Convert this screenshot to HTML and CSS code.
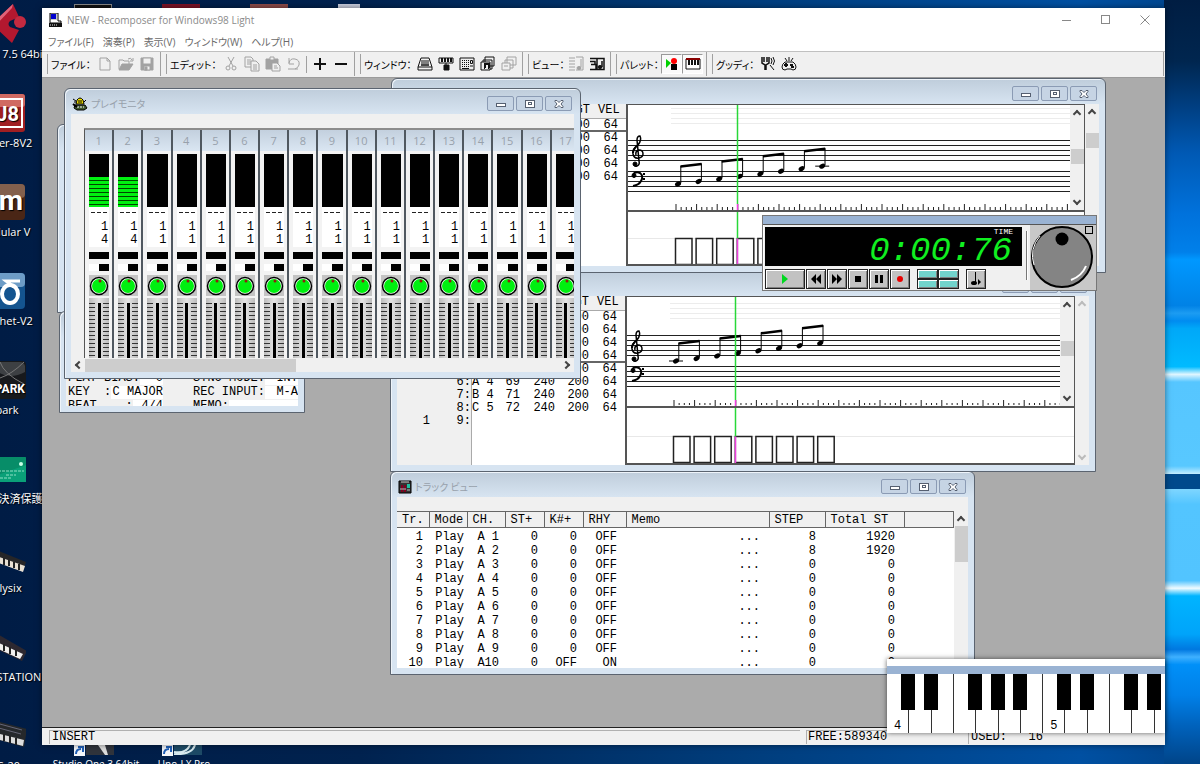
FILE: index.html
```
<!DOCTYPE html>
<html lang="ja">
<head>
    <meta charset="UTF-8">
    <meta name="viewport" content="width=device-width, initial-scale=1.0">
    <title>Recomposer for Windows98 Light</title>
    <link rel="stylesheet" href="styles.css">
</head>
<body>
    <div class="wallpaper-beam"></div>

    <!-- Desktop icons -->
    <div class="desktop-icons">
        <a href="#" class="shortcut">
            <svg width="48" height="48" viewBox="0 0 48 48"><path d="M35 4 20 18q-5 6 0 12l14 13 7-13-9-3q-3-3 0-6l9-4z" fill="#b3182f"/><path d="M35 4 20 18q-3 3-2 7L34 8z" fill="#e0637a"/><circle cx="42" cy="22" r="6" fill="#c32a40"/></svg>
            <span>Cubase 7.5 64bit</span>
        </a>
        <a href="#" class="shortcut">
            <svg width="48" height="48" viewBox="0 0 48 48"><rect x="1" y="5" width="46" height="38" rx="3" fill="#a11f22"/><rect x="1" y="5" width="46" height="13" rx="3" fill="#d06a62"/><rect x="4" y="10" width="40" height="28" fill="none" stroke="#fff" stroke-width="2"/><text x="41" y="32" text-anchor="end" class="logo-text logo-big">J8</text></svg>
            <span>Jupiter-8V2</span>
        </a>
        <a href="#" class="shortcut">
            <svg width="48" height="48" viewBox="0 0 48 48"><rect x="1" y="6" width="46" height="36" rx="4" fill="#4a2616"/><rect x="1" y="6" width="46" height="14" rx="4" fill="#82604d"/><text x="45" y="32" text-anchor="end" class="logo-text logo-huge">m</text></svg>
            <span>Modular V</span>
        </a>
        <a href="#" class="shortcut">
            <svg width="48" height="48" viewBox="0 0 48 48"><rect x="1" y="6" width="46" height="36" rx="4" fill="#14548f"/><rect x="1" y="6" width="46" height="14" rx="4" fill="#6d9cc6"/><path d="M42 14H28l8 6" fill="none" stroke="#fff" stroke-width="3"/><ellipse cx="32" cy="27" rx="8" ry="9" fill="none" stroke="#fff" stroke-width="4"/></svg>
            <span>Prophet-V2</span>
        </a>
        <a href="#" class="shortcut">
            <svg width="48" height="48" viewBox="0 0 48 48"><rect x="1" y="5" width="47" height="38" rx="4" fill="#17191c"/><path d="M20 16q12 8 27 0v-6q-1-4-5-4H20z" fill="#3d4043"/><path d="M22 6q4 12 24 22M22 22q12-4 24-16" stroke="#777" fill="none"/><text x="47" y="37" text-anchor="end" class="logo-text">SPARK</text></svg>
            <span>Spark</span>
        </a>
        <a href="#" class="shortcut">
            <svg width="48" height="48" viewBox="0 0 48 48"><rect x="0" y="12" width="49" height="25" rx="2" fill="#078d68"/><path d="M0 37 48 20v17z" fill="#0aa078"/><path d="M20 26h26M28 30h10M22 33h12" stroke="#8fe0c4" stroke-dasharray="3 1"/><circle cx="43" cy="19" r="2" fill="#c8ffe8"/></svg>
            <span>ネット決済保護</span>
        </a>
        <a href="#" class="shortcut">
            <svg width="48" height="48" viewBox="0 0 48 48"><path d="M8 12l40 16-3 9L8 24z" fill="#262628"/><path d="M10 19l37 13-2 6-35-13z" fill="#e8e0d4"/><path d="M16 20v7m5-5v7m5-5v7m5-5v6m5-4v6m5-4v6" stroke="#222" stroke-width="2"/></svg>
            <span>Polysix</span>
        </a>
        <a href="#" class="shortcut">
            <svg width="48" height="48" viewBox="0 0 48 48"><path d="M14 8l35 20-5 10-30-14z" fill="#2d2830"/><path d="M14 17l31 14-3 5-28-13z" fill="#f1efee"/><path d="M20 18v7m6-4v7m6-4v7m6-4v6" stroke="#222" stroke-width="2"/></svg>
            <span>WAVESTATION</span>
        </a>
        <a href="#" class="shortcut">
            <svg width="48" height="48" viewBox="0 0 48 48"><path d="M14 8l35 9-3 18-32-9z" fill="#25282b"/><path d="M14 20l32 8-1 6-31-8z" fill="#ddd"/><path d="M18 11l26 7m-27-3 26 7" stroke="#667"/><path d="M20 20v7m6-5v7m6-5v7m6-5v7" stroke="#222" stroke-width="2"/></svg>
            <span>MS-20</span>
        </a>
    </div>
    <div class="desktop-top">
        <span class="peek peek-dark"></span>
        <span class="peek peek-red"></span>
        <span class="peek peek-brown"></span>
        <span class="peek peek-light"></span>
    </div>
    <div class="desktop-bottom">
        <a href="#" class="shortcut-low">
            <svg width="44" height="12" viewBox="0 0 44 12"><rect x="12" width="28" height="10" fill="#30343c"/><path d="M24 0l7 10h3L31 0z" fill="#ddd"/><rect width="11" height="11" fill="#f4f7fb"/><path d="M2 9q0-5 5-5M4 2h5v5" fill="none" stroke="#2060b8" stroke-width="2"/></svg>
            <span>Studio One 3 64bit</span>
        </a>
        <a href="#" class="shortcut-low">
            <svg width="44" height="12" viewBox="0 0 44 12"><rect x="12" width="28" height="10" fill="#1d4a66"/><path d="M12 7q12 2 16-7m-16 9Q30 10 33 0" fill="none" stroke="#d8eaf0" stroke-width="2"/><rect width="11" height="11" fill="#f4f7fb"/><path d="M2 9q0-5 5-5M4 2h5v5" fill="none" stroke="#2060b8" stroke-width="2"/></svg>
            <span>Uno-LX Pro</span>
        </a>
    </div>

    <!-- Application window -->
    <div class="app">
        <header class="app-title">
            <svg width="14" height="15" viewBox="0 0 14 15"><rect x="1" y="0" width="7" height="7" fill="#c8c8c8"/><rect x="2" y="1" width="5" height="5" fill="#0000d0"/><path d="M1 0h8v8h3v2H1z" fill="none" stroke="#000"/><path d="M0 10h13v4H0z" fill="#111"/><path d="M1 12h8" stroke="#eee" stroke-dasharray="1 1"/></svg>
            <h1>NEW - Recomposer for Windows98 Light</h1>
            <div class="app-controls">
                <button aria-label="最小化"><svg width="10" height="10" viewBox="0 0 10 10"><path d="M0 5.500h9"/></svg></button>
                <button aria-label="最大化"><svg width="10" height="10" viewBox="0 0 10 10"><rect x=".5" y=".5" width="8" height="8"/></svg></button>
                <button aria-label="閉じる"><svg width="10" height="10" viewBox="0 0 10 10"><path d="M.5.5l9 9m0-9l-9 9"/></svg></button>
            </div>
        </header>

        <nav class="menu">
            <a href="#">ファイル(F)</a>
            <a href="#">演奏(P)</a>
            <a href="#">表示(V)</a>
            <a href="#">ウィンドウ(W)</a>
            <a href="#">ヘルプ(H)</a>
        </nav>

        <div class="toolbar">
            <div class="group">
                <span class="label">ファイル：</span>
                <div class="tools">
                    <button class="off" aria-label="新規"><svg viewBox="0 0 16 16"><path d="M3 2h7l3 3v9H3zM10 2v3h3"/></svg></button>
                    <button class="off" aria-label="開く"><svg viewBox="0 0 16 16"><path d="M1 13V4h4l1 1h5v3"/><path d="M1 14l3-6h11l-4 6z" class="fill"/><path d="M10 3q3-2 4 1m1-2v3h-3"/></svg></button>
                    <button class="off" aria-label="保存"><svg viewBox="0 0 16 16"><path d="M2 2h12v12H2z" class="fill"/><path d="M4 2h8v6H4z" fill="#f0f0f0"/><path d="M5 10h6v4H5z" fill="#f0f0f0"/><path d="M6 11h2v3H6z" class="fill"/></svg></button>
                </div>
            </div>
            <div class="group">
                <span class="label">エディット：</span>
                <div class="tools">
                    <button class="off" aria-label="切り取り"><svg viewBox="0 0 16 16"><path d="M5 1l5 9M11 1l-5 9"/><circle cx="5" cy="12" r="2"/><circle cx="11" cy="12" r="2"/></svg></button>
                    <button class="off" aria-label="コピー"><svg viewBox="0 0 16 16"><path d="M1 1h6l2 2v8H1zM3 4h4M3 6h4M3 8h4"/><path d="M7 5h5l3 3v7H7z" fill="#f0f0f0"/><path d="M9 9h4M9 11h4M9 13h4"/></svg></button>
                    <button class="off" aria-label="貼り付け"><svg viewBox="0 0 16 16"><path d="M1 3h12v10H1z" class="fill"/><path d="M5 1h4v3H5z" fill="#f0f0f0"/><path d="M7 7h5l3 3v5H7z" fill="#f0f0f0"/><path d="M9 10h3M9 12h4"/></svg></button>
                    <button class="off" aria-label="元に戻す"><svg viewBox="0 0 16 16"><path d="M3 7q1-5 6-4 5 1 4 6-1 3-4 4M3 2v6h5M2 13h10"/></svg></button>
                    <i class="sep"></i>
                    <button aria-label="追加"><svg viewBox="0 0 16 16"><path d="M2 8h12M8 2v12" stroke-width="2"/></svg></button>
                    <button aria-label="削除"><svg viewBox="0 0 16 16"><path d="M2 8h12" stroke-width="2"/></svg></button>
                </div>
            </div>
            <div class="group">
                <span class="label">ウィンドウ：</span>
                <div class="tools">
                    <button aria-label="ソング"><svg viewBox="0 0 16 16"><path d="M4 2h8l3 9v3H1v-3z"/><path d="M5 4v6m2-6v6m2-6v6m2-6v6M1 11h14M4 9h8"/></svg></button>
                    <button aria-label="再生モニタ"><svg viewBox="0 0 16 16"><path d="M1 2h14v5H1z"/><path d="M4 2v4m3-4v4m3-4v4m3-4v4" stroke-width="2"/><path d="M8 7v3M6 9h5v5H6z" class="fill"/></svg></button>
                    <button aria-label="トラック"><svg viewBox="0 0 16 16"><path d="M1 2h14v12H1z"/><path d="M3 4.500h7M3 6.500h7M3 8.500h7M3 10.500h7" stroke-dasharray="1 1"/><path d="M3 12.500h7M11.500 4.500h2v3h-2zM11 10h3"/></svg></button>
                    <button aria-label="譜面"><svg viewBox="0 0 16 16"><path d="M5 1h9v9H5zM3 4h9v9H3z"/><path d="M1 6h9v8H1z" fill="#f0f0f0"/><path d="M5 12V8h4v4M4 12h1m3 0h1" stroke-width="2"/></svg></button>
                    <button class="off" aria-label="重ねて表示"><svg viewBox="0 0 16 16"><path d="M6 1h9v8H6zM4 4h8v8H4z"/><path d="M1 7h8v7H1z" fill="#f0f0f0"/><path d="M3 10h4"/></svg></button>
                </div>
            </div>
            <div class="group">
                <span class="label">ビュー：</span>
                <div class="tools">
                    <button class="off" aria-label="リスト表示"><svg viewBox="0 0 16 16"><path d="M1 2h6M1 5h6M1 8h6M1 11h6M1 14h6M13 3v8M8 1h7v13H8"/><ellipse cx="11" cy="12" rx="2" ry="1.500" class="fill"/></svg></button>
                    <button aria-label="譜面表示"><svg viewBox="0 0 16 16"><path d="M1 2.500h14v11H8V2M1 5.500h5v3M2 8.500h5v5H1M13 5v6" stroke-width="1.500"/><ellipse cx="11" cy="11" rx="2" ry="1.500" class="fill"/></svg></button>
                </div>
            </div>
            <div class="group">
                <span class="label">パレット：</span>
                <div class="tools">
                    <button class="on" aria-label="トランスポート"><svg viewBox="0 0 16 16"><path d="M2 3l5 4-5 5z" fill="#00d000" stroke="none"/><path d="M7 8h6v6H7z" fill="#000" stroke="none"/><circle cx="10" cy="5" r="3" fill="#f00" stroke="none"/></svg></button>
                    <button class="on" aria-label="鍵盤"><svg viewBox="0 0 16 16"><path d="M1 3h14v10H1z" fill="#fff"/><path d="M1 3h14" stroke="#800" stroke-width="2"/><path d="M4 4v5m3-5v5m3-5v5m3-5v5" stroke-width="2"/></svg></button>
                </div>
            </div>
            <div class="group">
                <span class="label">グッディ：</span>
                <div class="tools start">
                    <button aria-label="チューナー"><svg viewBox="0 0 16 16"><path d="M2 1v6l3 2v5M9 1v6L6 9v5M4 1v5m3-5v5" stroke-width="1.500"/><path d="M11 2q2 3 0 6M13 1q3 4 0 8M10 9l4 5"/></svg></button>
                    <button aria-label="ゲーム"><svg viewBox="0 0 16 16"><path d="M4 6q-3 2-3 5t3 3l2-1h4l2 1q3 0 3-3t-3-5zM4 2l2 3m2-4v4m4-3l-2 3"/><path d="M3 9h4M5 7v4m4-2h3m-2 2h3" stroke-width="2"/></svg></button>
                </div>
            </div>
        </div>

        <!-- Document area -->
        <main class="mdi">
            <section class="win win-rear"></section>

            <section class="win win-song">
                <div class="win-title"></div>
                <div class="win-body song">
                    <div class="field"><label for="bias">PLAY BIAS:</label><input id="bias" value="0"></div>
                    <div class="field"><label for="sync">SYNC MODE:</label><input id="sync" value="INT"></div>
                    <div class="field"><label for="key">KEY  :</label><input id="key" value="C MAJOR"></div>
                    <div class="field"><label for="rec">REC INPUT:</label><input id="rec" value="M-A"></div>
                    <div class="field"><label for="beat">BEAT    :</label><input id="beat" value="4/4"></div>
                    <div class="field"><label for="memo">MEMO:</label><input id="memo"></div>
                </div>
            </section>

            <section class="win win-step-b">
                <div class="win-title"><span class="win-buttons"></span></div>
                <div class="win-body editor">
                    <table class="events"><colgroup><col class="c-meas"><col class="c-step"><col class="c-note"><col class="c-num"><col class="c-st"><col class="c-gt"><col class="c-vel"></colgroup><thead></thead><tbody id="eventsB"></tbody></table>
                    <div class="score" id="scoreB"></div>
                    <div class="vscroll faint"><i class="up"></i><i class="down"></i></div>
                </div>
            </section>

            <section class="win win-step-a">
                <div class="win-title"><span class="win-buttons"></span></div>
                <div class="win-body editor">
                    <table class="events"><colgroup><col class="c-meas"><col class="c-step"><col class="c-note"><col class="c-num"><col class="c-st"><col class="c-gt"><col class="c-vel"></colgroup><thead></thead><tbody id="eventsA"></tbody></table>
                    <div class="score" id="scoreA"></div>
                    <div class="vscroll"><i class="up"></i><b class="thumb thumb-a"></b></div>
                </div>
            </section>

            <section class="win win-track">
                <div class="win-title">
                    <svg width="14" height="14" viewBox="0 0 14 14"><path d="M1 1h12v12H1z" fill="#333" stroke="#000"/><path d="M3 2h8" stroke="#ccc"/><path d="M3 5h2v7H3zm3 0h2v7H6z" fill="#800020"/><path d="M9 4h3v4H9z" fill="#20c0a0"/><path d="M2 9h6M9 10h3" stroke="#bbb"/></svg>
                    <h2>トラック ビュー</h2>
                    <span class="win-buttons"></span>
                </div>
                <div class="win-body track">
                    <table class="tracks">
                        <colgroup><col class="t-tr"><col class="t-mode"><col class="t-ch"><col class="t-st"><col class="t-key"><col class="t-rhy"><col class="t-memo"><col class="t-step"><col class="t-total"><col></colgroup>
                        <thead><tr><th>Tr.</th><th>Mode</th><th>CH.</th><th>ST+</th><th>K#+</th><th>RHY</th><th>Memo</th><th>STEP</th><th>Total ST</th><th></th></tr></thead>
                        <tbody id="trackRows"></tbody>
                    </table>
                    <div class="vscroll"><i class="up"></i><b class="thumb thumb-track"></b></div>
                </div>
            </section>

            <section class="win win-monitor">
                <div class="win-title">
                    <svg width="16" height="14" viewBox="0 0 16 14"><path d="M5 3q3-4 6 0l1 4H4z" fill="#f0e000" stroke="#000"/><path d="M1 2l3 2M2 5h2M14 3l-2 2M7 3v3m2-3v3" stroke="#000"/><path d="M3 8h10l2 3-3 2H5L2 11z" fill="#405830" stroke="#000"/><path d="M5 10h7" stroke="#fff" stroke-dasharray="2 1"/><path d="M1 7l4 3" stroke="#000" stroke-width="2"/></svg>
                    <h2>プレイモニタ</h2>
                    <span class="win-buttons"></span>
                </div>
                <div class="win-body monitor">
                    <div class="strips" id="strips"></div>
                    <div class="hscroll"><i class="left"></i><b class="thumb"></b><i class="right"></i></div>
                </div>
            </section>

            <section class="transport">
                <div class="palette-bar"></div>
                <div class="transport-body">
                    <div class="deck">
                        <div class="lcd"><span class="lcd-label">TIME</span><span class="lcd-time">0:00:76</span></div>
                        <div class="keys">
                            <button class="wide" aria-label="再生"><svg width="12" height="10" viewBox="0 0 12 10"><path d="M3 0l6 5-6 5z" fill="#00d820"/></svg></button>
                            <button aria-label="巻戻し"><svg width="12" height="10" viewBox="0 0 12 10"><path d="M6 0v10L1 5zM11 0v10L6 5z"/></svg></button>
                            <button aria-label="早送り"><svg width="12" height="10" viewBox="0 0 12 10"><path d="M1 0v10l5-5zM6 0v10l5-5z"/></svg></button>
                            <button aria-label="停止"><svg width="12" height="10" viewBox="0 0 12 10"><path d="M3 2h6v6H3z"/></svg></button>
                            <button aria-label="一時停止"><svg width="12" height="10" viewBox="0 0 12 10"><path d="M2 1h3v8H2zM7 1h3v8H7z"/></svg></button>
                            <button aria-label="録音"><svg width="12" height="10" viewBox="0 0 12 10"><circle cx="6" cy="5" r="3" fill="#e80000"/></svg></button>
                            <div class="locators"><button aria-label="1"></button><button aria-label="2"></button><button aria-label="3"></button><button aria-label="4"></button></div>
                            <button aria-label="メトロノーム"><svg width="12" height="14" viewBox="0 0 12 14"><path d="M5 0h1v11H5z"/><ellipse cx="4" cy="11" rx="3" ry="2"/><path d="M8 7l3 3-3 3z"/></svg></button>
                        </div>
                    </div>
                    <i class="groove"></i>
                    <div class="jog">
                        <svg width="66" height="64" viewBox="0 0 66 64"><circle cx="32" cy="32" r="30" fill="#848484" stroke="#000" stroke-width="2"/><path d="M10 11A29 29 0 0 0 4 40" fill="none" stroke="#fff"/><path d="M41 55Q52 51 56 41" fill="none" stroke="#fff" stroke-width="2"/><circle cx="32" cy="14" r="6.500"/><rect x="55.500" y="1.500" width="7" height="7" fill="#c8c8c8" stroke="#000"/></svg>
                    </div>
                </div>
            </section>
        </main>

        <footer class="status">
            <span class="cell grow">INSERT</span>
            <span class="cell free">FREE:589340</span>
            <span class="cell used">USED:   16</span>
        </footer>

        <section class="piano">
            <div class="palette-bar"></div>
            <div class="piano-keys" id="pianoKeys"></div>
        </section>
    </div>

    <script src="script.js"></script>
</body>
</html>
```
FILE: styles.css
```
* { box-sizing: border-box; }
body {
    margin: 0;
    min-height: 100vh;
    position: relative;
    overflow: hidden;
    font-family: "Open Sans", "Noto Sans CJK JP", sans-serif;
    font-size: 11px;
    color: #000;
    background: linear-gradient(90deg, #001c45 0%, #00224f 30%, #003d7c 62%, #0050a2 90%, #004389 100%);
}
h1, h2 { margin: 0; font-weight: normal; }
a { color: inherit; text-decoration: none; }
button, input { font: inherit; margin: 0; padding: 0; border: 0; border-radius: 0; background: none; }

/* Wallpaper light on the right */
.wallpaper-beam {
    position: absolute;
    right: 0;
    top: 0;
    bottom: 0;
    width: 36px;
    background: linear-gradient(180deg, #001d42 0, #00264f 8%, #003f82 14%, #0059b4 20%, #0072dc 28%, #0080ea 33%, #0098ff 34%, #0082e6 40%, #1c9cf2 41%, #008cf0 42%, #00a8f8 43%, #00bbff 48%, #e0f6ff 49%, #56c6ff 50%, #58c8ff 61%, #c0ecff 62%, #004a8c 62%, #004a8c 64%, #7fd6ff 64%, #53c5ff 66%, #52c4ff 76%, #f0fbff 77%, #00b4ff 78%, #00a4fa 83%, #0078e0 85%, #3fb0ff 86%, #0090f8 87%, #0080e8 91%, #0062bc 95%, #004488 100%);
}

/* Desktop shortcuts */
.desktop-icons {
    position: absolute;
    left: -48px;
    top: 0;
    width: 100px;
    display: flex;
    flex-direction: column;
}
.shortcut {
    height: 89px;
    display: flex;
    flex-direction: column;
    align-items: center;
    color: #fff;
    white-space: nowrap;
    text-shadow: 1px 1px 1px #000;
}
.shortcut svg { flex: none; }
.shortcut span { padding-left: 4px; line-height: 12px; }
.logo-text { font: bold 12px Roboto, sans-serif; fill: #fff; }
.logo-big { font-size: 20px; }
.logo-huge { font-size: 28px; }
.desktop-top {
    position: absolute;
    left: 74px;
    top: 4px;
    display: flex;
    gap: 50px;
}
.peek { width: 38px; height: 5px; border: 1px solid #888; background: #111; }
.peek-red { background: #7c1226; border: 0; }
.peek-brown { background: #8c4a48; border: 0; }
.peek-light { width: 22px; background: #c8ccdc; border: 0; }
.desktop-bottom {
    position: absolute;
    left: 52px;
    bottom: -6px;
    display: flex;
}
.shortcut-low {
    display: flex;
    flex-direction: column;
    align-items: center;
    gap: 1px;
    width: 88px;
    color: #fff;
    font-size: 10px;
    line-height: 12px;
    white-space: nowrap;
}

/* Application frame */
.app {
    position: absolute;
    left: 42px;
    right: 35px;
    top: 8px;
    bottom: 19px;
    display: flex;
    flex-direction: column;
    background: #fff;
    box-shadow: 0 0 6px rgba(0, 0, 0, 0.5);
}
.app-title {
    height: 24px;
    flex: none;
    display: flex;
    align-items: center;
    gap: 4px;
    padding: 0 15px 0 7px;
    color: #8b8b8b;
}
.app-title h1 { font-size: 10px; flex: 1; }
.app-controls { display: flex; gap: 29px; }
.app-controls button { display: flex; }
.app-controls svg { fill: none; stroke: #888; }
.menu {
    height: 19px;
    flex: none;
    display: flex;
    align-items: center;
    gap: 9px;
    padding: 0 6px;
    font-size: 10px;
    color: #6a6a6a;
    font-feature-settings: "palt";
}
.toolbar {
    height: 27px;
    flex: none;
    display: grid;
    grid-template-columns: 119px 194px 168px 88px 96px 1fr;
    padding: 0 0 1px 1px;
    background: #f0f0f0;
    border-top: 1px solid #c0c0c0;
    border-bottom: 1px solid #9b9b9b;
}
.group {
    display: flex;
    align-items: center;
    padding: 0 3px 0 8px;
    border-right: 1px solid #a0a0a0;
    margin-right: 1px;
    background: linear-gradient(#a0a0a0, #a0a0a0) 4px 50% / 1px 20px no-repeat;
}
.label {
    font-size: 10px;
    font-feature-settings: "palt";
    white-space: nowrap;
}
.tools { display: flex; align-items: center; margin-left: auto; }
.tools.start { margin-left: 3px; }
.tools button {
    width: 21px;
    height: 20px;
    display: flex;
    align-items: center;
    justify-content: center;
}
.tools svg { width: 16px; height: 16px; fill: none; stroke: #111; }
.tools .fill { fill: #111; }
.tools .off svg { stroke: #a2a2a2; }
.tools .off .fill { fill: #a2a2a2; }
.tools .on { background: #fafafa; border: 1px solid #999; border-right-color: #fff; border-bottom-color: #fff; }
.sep { width: 1px; height: 17px; margin: 0 2px; background: #a0a0a0; }

/* Document area and child windows */
.mdi {
    flex: 1;
    min-height: 0;
    position: relative;
    overflow: hidden;
    background: #ababab;
    font-family: "Liberation Mono", "Noto Sans CJK JP", monospace;
    font-size: 12px;
}
.win {
    position: absolute;
    display: flex;
    flex-direction: column;
    padding: 0 6px 6px;
    border: 1px solid #5b6470;
    border-radius: 6px 6px 0 0;
    background: linear-gradient(#bfcddb 0, #d7e4f1 25px);
    box-shadow: inset 1px 1px 0 #eef4fa;
}
.win-title {
    height: 25px;
    flex: none;
    display: flex;
    align-items: center;
    gap: 3px;
    padding: 4px 2px 0 1px;
}
.win-title h2 {
    font-family: "Noto Sans CJK JP", sans-serif;
    font-size: 10px;
    font-feature-settings: "palt";
    color: #98a1ab;
}
.win-buttons { display: flex; gap: 2px; margin-left: auto; }
.win-buttons button {
    width: 27px;
    height: 15px;
    display: flex;
    align-items: center;
    justify-content: center;
    border: 1px solid #8b9bb4;
    border-radius: 2px;
    background: #c6d4e4;
}
.win-buttons svg { fill: #fff; stroke: #555f70; }
.win-body { flex: 1; min-height: 0; overflow: hidden; background: #f0f0f0; }
.win-rear { left: 15px; top: 46px; width: 300px; height: 189px; }
.win-song { left: 17px; top: 233px; width: 246px; height: 102px; }
.win-step-a { left: 349px; top: 0; width: 715px; height: 195px; }
.win-step-b { left: 348px; top: 192px; width: 706px; height: 202px; }
.win-track { left: 348px; top: 393px; width: 585px; height: 204px; }
.win-monitor { left: 22px; top: 10px; width: 517px; height: 291px; }

/* Song settings */
.song {
    display: grid;
    grid-template-columns: 95px 1fr;
    gap: 1px 30px;
    align-content: start;
    padding: 35px 0 0 2px;
    line-height: 13px;
}
.field { display: flex; min-width: 0; }
.field label { white-space: pre; }
.field input { flex: 1; min-width: 0; width: 0; height: 13px; background: #fff; text-align: right; }

/* Scroll bars */
.vscroll {
    width: 14px;
    flex: none;
    display: flex;
    flex-direction: column;
    align-items: center;
    padding: 6px 0;
    background: #f0f0f0;
}
.up, .down, .left, .right {
    width: 6px;
    height: 6px;
    border: solid #444;
    border-width: 2px 0 0 2px;
    transform: rotate(45deg);
}
.down { margin-top: auto; transform: rotate(225deg); }
.left { transform: rotate(-45deg); }
.right { transform: rotate(135deg); margin-left: auto; }
.faint i { border-color: #bbb; }
.thumb { background: #cdcdcd; }
.vscroll .thumb { width: 13px; height: 15px; }
.thumb-a { margin-top: 17px; }
.vscroll .thumb-track { height: 36px; margin-top: 3px; }

/* Step editor */
.editor { display: flex; background: linear-gradient(90deg, #f0f0f0 74px, #aaa 74px, #aaa 75px, #fff 75px); }
.events {
    width: 228px;
    flex: none;
    align-self: flex-start;
    table-layout: fixed;
    border-collapse: collapse;
    line-height: 13px;
}
.events th, .events td { height: 13px; padding: 0 8px 0 0; text-align: right; font-weight: normal; white-space: pre; }
.events thead th { height: 14px; background: #f0f0f0; border-bottom: 1px solid #aaa; }
.events .step { padding-right: 1px; }
.events .cursor td { background: linear-gradient(#666, #666) 0 100% / 100% 2px no-repeat; }
.c-meas { width: 41px; }
.c-step { width: 34px; }
.c-note, .c-num, .c-vel { width: 28px; }
.c-st { width: 35px; }
.c-gt { width: 34px; }
.score {
    flex: 1;
    min-width: 0;
    display: flex;
    flex-direction: column;
    border: solid #555;
    border-width: 1px 1px 2px 2px;
    background: #fff;
}
.staff-row { flex: 2; min-height: 0; display: flex; border-bottom: 2px solid #555; }
.staff-row svg { flex: 1; min-width: 0; height: 100%; }
.staff-row .vscroll { padding: 6px 0; }
.staff-row .thumb { margin-top: 32px; }
.velocity { flex: 1; min-height: 0; width: 100%; }

/* Track list */
.track { display: flex; padding-top: 14px; background: linear-gradient(#f0f0f0 30px, #fff 30px); }
.tracks {
    flex: 1;
    align-self: flex-start;
    table-layout: fixed;
    border-collapse: collapse;
    line-height: 14px;
}
.tracks th {
    height: 16px;
    padding: 0 0 0 5px;
    text-align: left;
    font-weight: normal;
    white-space: pre;
    background: #f0f0f0;
    border: solid #666;
    border-width: 1px 1px 1px 0;
}
.tracks td { height: 14px; padding: 0 6px 0 0; text-align: right; white-space: pre; }
.tracks td:nth-child(n+6) { padding-right: 9px; }
.tracks tbody tr:first-child td { height: 16px; padding-top: 2px; }
.tracks td:nth-child(2) { padding-right: 3px; }
.t-tr { width: 32px; }
.t-mode, .t-ch { width: 38px; }
.t-st, .t-key { width: 39px; }
.t-rhy { width: 43px; }
.t-memo { width: 143px; }
.t-step { width: 56px; }
.t-total { width: 79px; }

/* Play monitor */
.monitor { padding: 14px 0 0 13px; display: flex; flex-direction: column; }
.strips {
    flex: 1;
    min-height: 0;
    display: grid;
    grid-template-columns: repeat(17, 1fr);
    margin-right: -7px;
    overflow: hidden;
    border-top: 2px solid #8c8c8c;
    border-left: 1px solid #555;
    background: #fff;
}
.strip {
    display: flex;
    flex-direction: column;
    padding: 0 3px 0 4px;
    border-right: 2px solid #505860;
    background: #f3f3f3;
    min-width: 0;
    overflow: hidden;
}
.strip header {
    height: 21px;
    flex: none;
    margin: 0 -3px 3px -4px;
    font: 11px/21px "Open Sans", sans-serif;
    text-align: center;
    color: #98a1ab;
    background: linear-gradient(#c3d0de, #dae6f2);
}
.meter { height: 53px; flex: none; display: flex; align-items: flex-end; background: #000; }
.level { width: 100%; background: repeating-linear-gradient(#00f010 0 3px, #004400 3px 4px); }
.values { padding: 5px 1px 0 0; background: #fff; text-align: right; line-height: 13px; }
.values hr { height: 1px; margin: 0 0 8px 2px; border: 0; background: repeating-linear-gradient(90deg, #222 0 4px, #fff 4px 6px); }
.values div { height: 13px; }
.lamp { height: 7px; flex: none; margin-top: 5px; background: #000; }
.lamp.half { background: linear-gradient(90deg, #fff 50%, #000 50%); }
.knob { height: 21px; flex: none; margin-top: 4px; background: #c4c4c4; display: flex; justify-content: center; align-items: center; }
.fader { flex: 1; min-height: 0; margin-top: 2px; padding-top: 5px; display: flex; justify-content: space-between; background: linear-gradient(90deg, #bbb, #e4e4e4 50%, #bbb); }
.fader i { width: 6px; background: repeating-linear-gradient(#333 0 1px, transparent 1px 4px); }
.fader b { width: 3px; background: #000; }
.hscroll { height: 14px; flex: none; display: flex; align-items: center; margin-left: -8px; padding-right: 5px; }
.hscroll .thumb { width: 211px; height: 13px; margin-left: 3px; }

/* Transport palette */
.palette-bar { height: 8px; flex: none; background: #9ab3d3; }
.transport {
    position: absolute;
    left: 720px;
    top: 137px;
    width: 335px;
    border: 1px solid #777;
    background: #f0f0f0;
    box-shadow: inset 1px 1px 0 #fff;
}
.transport-body { display: flex; border-top: 1px solid #555; }
.deck { flex: 1; padding: 2px 0 1px 2px; }
.lcd {
    position: relative;
    height: 39px;
    padding: 9px 10px 0 0;
    margin-bottom: 3px;
    text-align: right;
    color: #10f020;
    background: #000;
    font-size: 34px;
    font-style: italic;
    line-height: 30px;
}
.lcd-label {
    position: absolute;
    right: 9px;
    top: 0;
    font: 8px/10px "Liberation Mono", monospace;
    color: #fff;
}
.keys { display: flex; gap: 1px; }
.keys button {
    width: 20px;
    height: 20px;
    display: flex;
    align-items: center;
    justify-content: center;
    background: #c2c2c2;
    border: 1px solid #222;
    box-shadow: inset 1px 1px 0 #fff, inset -1px -1px 0 #808080;
}
.keys .wide { width: 40px; }
.locators { display: grid; grid-template-columns: 1fr 1fr; width: 42px; margin: 0 6px; }
.keys .locators button { width: 21px; height: 10px; background: #72d4cc; }
.groove { width: 2px; margin: 6px 2px 10px 4px; background: #777; border-right: 1px solid #fff; }
.jog { background: #c8c8c8; display: flex; }

/* Status bar */
.status {
    height: 18px;
    flex: none;
    display: flex;
    padding: 2px 0 1px 7px;
    gap: 6px;
    border-top: 1px solid #222;
    background: #f0f0f0;
    font: 12px/14px "Liberation Mono", monospace;
    white-space: pre;
}
.cell { padding-left: 2px; border: 1px solid #b0b0b0; border-width: 1px 0 0 1px; line-height: 13px; }
.grow { flex: 1; }
.free { width: 156px; padding-left: 1px; }
.used { width: 197px; }

/* Keyboard palette */
.piano {
    position: absolute;
    right: 0;
    bottom: 12px;
    width: 278px;
    overflow: hidden;
    border-top: 7px solid #fff;
    background: #fff;
    box-shadow: 0 0 5px rgba(0, 0, 0, 0.6);
}
.piano-keys { display: grid; grid-template-columns: repeat(13, 1fr); height: 59px; margin-right: -12px; }
.white {
    position: relative;
    padding: 0 0 1px;
    display: flex;
    align-items: flex-end;
    justify-content: center;
    font: 12px/12px "Liberation Mono", monospace;
    border-right: 1px solid #333;
    background: #fff;
}
.black::after {
    content: "";
    position: absolute;
    z-index: 1;
    right: -7px;
    top: 0;
    width: 14px;
    height: 36px;
    background: #000;
}
```
FILE: script.js
```
const $ = id => document.getElementById(id);

// window buttons
document.querySelectorAll('.win-buttons').forEach(box => {
    box.innerHTML = `
        <button aria-label="最小化"><svg width="10" height="8" viewBox="0 0 10 8"><rect x=".5" y="3.500" width="9" height="3"/></svg></button>
        <button aria-label="最大化"><svg width="10" height="8" viewBox="0 0 10 8"><rect x=".5" y=".5" width="9" height="7"/><rect x="3.500" y="2.500" width="3" height="2"/></svg></button>
        <button aria-label="閉じる"><svg width="10" height="8" viewBox="0 0 10 8"><path d="M1 .5h2l2 2 2-2h2v1L7 4l2 2.500v1H7l-2-2-2 2H1v-1L3 4 1 1.500z"/></svg></button>`;
});

// step lists
const header = '<tr><th></th><th></th><th></th><th></th><th></th><th>GT</th><th>VEL</th></tr>';
document.querySelectorAll('.events thead').forEach(t => t.innerHTML = header);

function eventRows(notes, cursor, extra) {
    let html = notes.map(([name, num], i) => `
        <tr class="${i === cursor ? 'cursor' : ''}"><td></td><td class="step">${i + 1}:</td>
        <td>${name}</td><td>${num}</td><td>240</td><td>200</td><td>64</td></tr>`).join('');
    if (extra) {
        html += `<tr><td>1</td><td class="step">${notes.length + 1}:</td><td colspan="5"></td></tr>`;
    }
    return html;
}
$('eventsA').innerHTML = eventRows([['E 3', 52], ['F 3', 53], ['G 3', 55], ['A 3', 57], ['B 3', 59]], 0, false);
$('eventsB').innerHTML = eventRows([['C 4', 60], ['D 4', 62], ['E 4', 64], ['F 4', 65], ['G 4', 67], ['A 4', 69], ['B 4', 71], ['C 5', 72]], 3, true);

// score drawing: staves, clefs, beamed notes, ruler
const STEP = 20.6;

function line(x1, y1, x2, y2, color = '#222', w = 1) {
    return `<line x1="${x1}" y1="${y1}" x2="${x2}" y2="${y2}" stroke="${color}" stroke-width="${w}"/>`;
}

function score(o) {
    let s = '';
    for (let i = 0; i < 4; i++) s += line(43, o.top - 31.5 + i * 5, '100%', o.top - 31.5 + i * 5, '#ececec');
    for (let i = 0; i < 5; i++) {
        s += line(0, o.top + i * 5 + 0.5, '100%', o.top + i * 5 + 0.5);
        s += line(0, o.top + i * 5 + 31.5, '100%', o.top + i * 5 + 31.5);
    }
    s += `<g transform="translate(0 ${o.top})" fill="none" stroke="#000">
        <path d="M6 24q0 3 3 2 3-1 2-5L9 0q0-4 3-4 2 4-2 9-6 4-5 9 1 5 6 4 4-1 4-4 0-4-4-4-4 1-3 5" stroke-width="1.500"/>
        <path d="M10 5q-5 4-5 8" stroke-width="2"/><circle cx="7" cy="24" r="2" fill="#000"/>
        <path d="M5 35q2-4 7-2 4 3 1 8-2 4-8 5" stroke-width="2"/><circle cx="6" cy="35.500" r="2" fill="#000"/>
        <path d="M16 33v2m0 3v2" stroke-width="2"/></g>`;
    for (let i = 0; i < 8; i++) {
        const x = o.x + i * STEP;
        const y = o.y - i * 2.55;
        s += `<ellipse cx="${x}" cy="${y}" rx="3.200" ry="2.300" transform="rotate(-30 ${x} ${y})"/>`;
        s += line(x + 2.8, y - 1, x + 2.8, y - 18, '#000');
        if (i % 2 === 0) s += line(x + 2.5, y - 17.5, x + STEP + 3, y - 20, '#000', 2.5);
        if (i === o.ledger) s += line(x - 7, y, x + 7, y, '#000');
    }
    for (let i = 0; i < o.ticks; i++) {
        const x = o.x - 2 + i * STEP / 4;
        s += line(x, o.bottom - (i % 4 ? 3 : 6), x, o.bottom - (i % 4 ? o.gap : 0));
    }
    s += line(o.play, 0, o.play, o.bottom - 6, '#28d838', 1.5);
    s += line(o.play, o.bottom - 6, o.play, o.bottom, '#f040e0', 1.5);

    let v = line(0, o.barTop, '100%', o.barTop, '#e8e8e8');
    for (let i = 0; i < 8; i++) {
        v += `<rect x="${o.x - 2.5 + i * STEP}" y="${o.barTop}" width="16.500" height="26" fill="none" stroke="#222" stroke-width="1.500"/>`;
    }
    v += line(o.play, 0, o.play, o.barTop, '#28d838', 1.5);
    v += line(o.play, o.barTop, o.play, 60, '#f040e0', 1.5);

    return `<div class="staff-row"><svg width="100%">${s}</svg>
        <div class="vscroll"><i class="up"></i><b class="thumb"></b><i class="down"></i></div></div>
        <svg class="velocity" width="100%">${v}</svg>`;
}
$('scoreA').innerHTML = score({ top: 35, x: 50, y: 79, ledger: 7, ticks: 78, gap: 0, bottom: 105, play: 109.5, barTop: 26.5 });
$('scoreB').innerHTML = score({ top: 38, x: 49, y: 64, ledger: 0, ticks: 76, gap: 1, bottom: 109, play: 108.5, barTop: 28.5 });

// track rows
let rows = '';
for (let i = 1; i <= 10; i++) {
    const used = i < 3;
    rows += `<tr><td>${i}</td><td>Play</td><td>A${String(i).padStart(2, ' ')}</td><td>0</td>
        <td>${i === 10 ? 'OFF' : '0'}</td><td>${i === 10 ? 'ON' : 'OFF'}</td><td>...</td>
        <td>${used ? 8 : 0}</td><td>${used ? 1920 : 0}</td><td></td></tr>`;
}
$('trackRows').innerHTML = rows;

// monitor strips
let strips = '';
for (let i = 1; i <= 17; i++) {
    const level = i < 3 ? 57 : 0;
    strips += `<div class="strip"><header>${i}</header>
        <div class="meter"><div class="level" style="height:${level}%"></div></div>
        <div class="values"><hr><div>1</div><div>${i < 3 ? 4 : 1}</div></div>
        <div class="lamp"></div><div class="lamp half"></div>
        <div class="knob"><svg width="20" height="20" viewBox="0 0 20 20"><circle cx="10" cy="10" r="8.500" fill="#fff" stroke="#000" stroke-width="1.500"/><circle cx="10" cy="10" r="7" fill="#00f010"/><circle cx="11" cy="5" r="1.500" fill="#902010"/></svg></div>
        <div class="fader"><i></i><b></b><i></i></div></div>`;
}
$('strips').innerHTML = strips;

// piano keys, C4 upwards
const sharp = [1, 1, 0, 1, 1, 1, 0];
let keys = '';
for (let i = 0; i < 13; i++) {
    keys += `<button class="white ${sharp[i % 7] ? 'black' : ''}">${i % 7 === 0 ? 4 + i / 7 : ''}</button>`;
}
$('pianoKeys').innerHTML = keys;
```
